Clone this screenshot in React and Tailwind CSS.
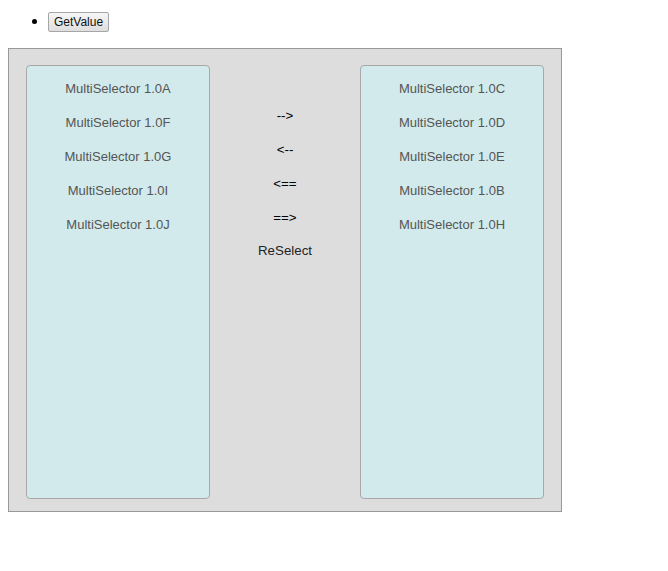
export default function App() {
  const left = ["MultiSelector 1.0A", "MultiSelector 1.0F", "MultiSelector 1.0G", "MultiSelector 1.0I", "MultiSelector 1.0J"];
  const right = ["MultiSelector 1.0C", "MultiSelector 1.0D", "MultiSelector 1.0E", "MultiSelector 1.0B", "MultiSelector 1.0H"];
  const mid = ["-->", "<--", "<==", "==>", "ReSelect"];
  return (
    <div className="w-[668px] h-[571px] bg-white font-['Liberation_Sans',Arial,sans-serif]">
      <div className="pt-[9px] pl-[8px]">
        <ul className="list-disc pl-[40px]">
          <li className="text-black">
            <button className="h-[20px] w-[61px] text-[12px] leading-none text-[#111] border border-[#a6a6a6] rounded-[2px] bg-gradient-to-b from-[#f6f6f6] to-[#dedede]">
              GetValue
            </button>
          </li>
        </ul>
      </div>
      <div className="ml-[8px] mt-[15px] w-[554px] h-[464px] border border-[#999] bg-[#dddddd] flex pl-[17px] pr-[17px] pt-[16px] pb-[12px]">
        <div className="w-[184px] h-full border border-[#a8a8a8] rounded-[4px] bg-[#d2eaeb] pt-[6px]">
          {left.map((t) => (
            <div key={t} className="h-[34px] flex items-center justify-center text-[13px] text-[#555]">{t}</div>
          ))}
        </div>
        <div className="flex-1 flex flex-col items-center pt-[34px]">
          {mid.map((t, i) => (
            <div key={t} className={`${i === 4 ? "h-[32px] text-[#222]" : "h-[34px] text-black"} flex items-center justify-center text-[13.3px]`}>{t}</div>
          ))}
        </div>
        <div className="w-[184px] h-full border border-[#a8a8a8] rounded-[4px] bg-[#d2eaeb] pt-[6px]">
          {right.map((t) => (
            <div key={t} className="h-[34px] flex items-center justify-center text-[13px] text-[#555]">{t}</div>
          ))}
        </div>
      </div>
    </div>
  );
}
